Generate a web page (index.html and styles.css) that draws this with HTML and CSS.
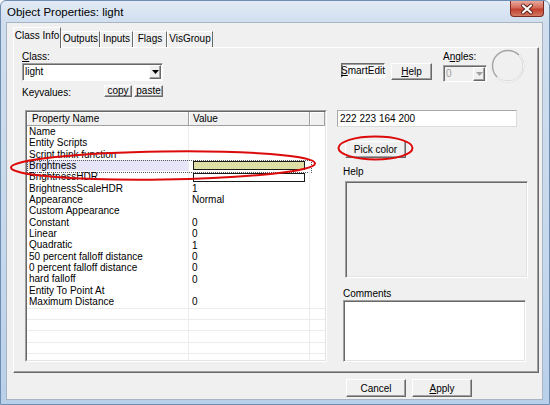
FILE: index.html
```html
<!DOCTYPE html>
<html>
<head>
<meta charset="utf-8">
<title>Object Properties: light</title>
<link rel="stylesheet" href="styles.css">
</head>
<body>
<div class="window">
  <div class="titlebar">
    <span class="title">Object Properties: light</span>
    <div class="close">
      <svg width="32" height="14" viewBox="0 0 32 14"><path d="M12 3.5 L20 10.5 M20 3.5 L12 10.5" stroke="#5b1d14" stroke-width="4" stroke-linecap="round"/><path d="M12 3.5 L20 10.5 M20 3.5 L12 10.5" stroke="#fff" stroke-width="2.2" stroke-linecap="round"/></svg>
    </div>
  </div>
  <div class="client">
    <div class="tabs">
      <div class="tab active">Class Info</div>
      <div class="tab">Outputs</div>
      <div class="tab">Inputs</div>
      <div class="tab">Flags</div>
      <div class="tab">VisGroup</div>
    </div>
    <div class="page">
      <div class="top">
        <div class="classbox">
          <div class="label"><u>C</u>lass:</div>
          <div class="combo">
            <span class="combo-text">light</span>
            <span class="combo-btn"><svg width="7" height="4" viewBox="0 0 7 4"><path d="M0 0H7L3.5 4Z" fill="#000"/></svg></span>
          </div>
          <div class="kvrow">
            <span class="label">Keyvalues:</span>
            <span class="kvbtns"><span class="btn small copy">copy</span><span class="btn small paste">paste</span></span>
          </div>
        </div>
        <div class="toggle"><u>S</u>martEdit</div>
        <div class="btn helpbtn"><u>H</u>elp</div>
        <div class="angles">
          <div class="label">A<u>n</u>gles:</div>
          <div class="combo disabled">
            <span class="combo-text">0</span>
            <span class="combo-btn"><svg width="7" height="4" viewBox="0 0 7 4"><path d="M0 0H7L3.5 4Z" fill="#a0a0a0"/></svg></span>
          </div>
        </div>
        <svg class="dial" width="34" height="34" viewBox="0 0 34 34">
          <circle cx="17" cy="17" r="15.5" fill="none" stroke="#a3a3a3" stroke-width="1.4"/>
          <path d="M28 6 A15.5 15.5 0 0 1 6 28" fill="none" stroke="#f4f4f4" stroke-width="1.2"/>
        </svg>
      </div>
      <div class="main">
        <div class="list">
          <div class="list-inner">
            <div class="header">
              <div class="hc c1">Property Name</div>
              <div class="hc c2">Value</div>
              <div class="hc c3"></div>
            </div>
            <div class="row"><div class="c1">Name</div><div class="c2"></div><div class="c3"></div></div>
            <div class="row"><div class="c1">Entity Scripts</div><div class="c2"></div><div class="c3"></div></div>
            <div class="row"><div class="c1">Script think function</div><div class="c2"></div><div class="c3"></div></div>
            <div class="row focus"><div class="c1 sel">Brightness</div><div class="c2"><span class="swatch color"></span></div><div class="c3"></div></div>
            <div class="row"><div class="c1">BrightnessHDR</div><div class="c2"><span class="swatch"></span></div><div class="c3"></div></div>
            <div class="row"><div class="c1">BrightnessScaleHDR</div><div class="c2">1</div><div class="c3"></div></div>
            <div class="row"><div class="c1">Appearance</div><div class="c2">Normal</div><div class="c3"></div></div>
            <div class="row"><div class="c1">Custom Appearance</div><div class="c2"></div><div class="c3"></div></div>
            <div class="row"><div class="c1">Constant</div><div class="c2">0</div><div class="c3"></div></div>
            <div class="row"><div class="c1">Linear</div><div class="c2">0</div><div class="c3"></div></div>
            <div class="row"><div class="c1">Quadratic</div><div class="c2">1</div><div class="c3"></div></div>
            <div class="row"><div class="c1">50 percent falloff distance</div><div class="c2">0</div><div class="c3"></div></div>
            <div class="row"><div class="c1">0 percent falloff distance</div><div class="c2">0</div><div class="c3"></div></div>
            <div class="row"><div class="c1">hard falloff</div><div class="c2">0</div><div class="c3"></div></div>
            <div class="row"><div class="c1">Entity To Point At</div><div class="c2"></div><div class="c3"></div></div>
            <div class="row"><div class="c1">Maximum Distance</div><div class="c2">0</div><div class="c3"></div></div>
            <div class="row empty"><div class="c1"></div><div class="c2"></div><div class="c3"></div></div>
            <div class="row empty"><div class="c1"></div><div class="c2"></div><div class="c3"></div></div>
            <div class="row empty"><div class="c1"></div><div class="c2"></div><div class="c3"></div></div>
            <div class="row empty"><div class="c1"></div><div class="c2"></div><div class="c3"></div></div>
            <div class="row empty"><div class="c1"></div><div class="c2"></div><div class="c3"></div></div>
          </div>
        </div>
        <div class="side">
          <div class="valuefield">222 223 164 200</div>
          <div class="btn pick">Pick color</div>
          <div class="label side-label">Help</div>
          <div class="helpbox"></div>
          <div class="label side-label comments-label">Comments</div>
          <div class="comments"></div>
        </div>
      </div>
    </div>
    <div class="footer">
      <div class="btn dlg">Cancel</div>
      <div class="btn dlg"><u>A</u>pply</div>
    </div>
  </div>
  <svg class="annot" width="550" height="405" viewBox="0 0 550 405">
    <ellipse cx="163" cy="165.5" rx="152" ry="14" transform="rotate(-0.8 163 165.5)" fill="none" stroke="#dc0a0a" stroke-width="2"/>
    <ellipse cx="375.5" cy="148" rx="37" ry="11.5" fill="none" stroke="#dc0a0a" stroke-width="2"/>
  </svg>
</div>
</body>
</html>
```
FILE: styles.css
```css
* { box-sizing: border-box; }
html, body { margin: 0; padding: 0; }
body {
  width: 550px;
  height: 405px;
  overflow: hidden;
  background: #fff;
  font-family: "Liberation Sans Narrow", "Liberation Sans", Arial, sans-serif;
  font-size: 10px;
  color: #000;
}
u { text-decoration: underline; text-underline-offset: 1px; }

.window {
  position: relative;
  width: 550px;
  height: 405px;
  border: 1px solid #6d8db3;
  border-radius: 6px 6px 0 0;
  background: linear-gradient(to bottom, #e2ebf6 0, #d0deee 22px, #c6d8ec 60%, #b9d0ea 100%);
  padding: 0 6px 4px 5px;
  display: flex;
  flex-direction: column;
}

.titlebar {
  height: 21px;
  margin: 0 -6px 0 -5px;
  padding-left: 6px;
  display: flex;
  align-items: flex-start;
}
.title {
  font-size: 11.5px;
  line-height: 22px;
}
.close {
  margin-left: auto;
  margin-right: 5px;
  width: 34px;
  height: 16px;
  border: 1px solid #7c2a22;
  border-top: none;
  border-radius: 0 0 4px 4px;
  background: linear-gradient(to bottom, #e9a99c 0, #d56a5a 45%, #c2402f 55%, #d27a63 100%);
  display: flex;
  align-items: center;
  justify-content: center;
}

.client {
  flex: 1;
  background: #f0f0f0;
  border: 1px solid #a9b5c4;
  padding: 4px 0 0 6px;
  display: flex;
  flex-direction: column;
}

.tabs {
  display: flex;
  height: 20px;
  align-items: flex-end;
  position: relative;
  z-index: 1;
}
.tab {
  height: 16px;
  border: 1px solid;
  border-color: #fff #696969 transparent #fff;
  border-bottom: none;
  line-height: 14px;
  text-align: center;
  background: #f0f0f0;
  white-space: nowrap;
}
.tab:nth-child(1) { width: 48px; }
.tab:nth-child(2) { width: 39px; }
.tab:nth-child(3) { width: 33px; }
.tab:nth-child(4) { width: 34px; }
.tab:nth-child(5) { width: 46px; }
.tab.active {
  height: 21px;
  margin-bottom: -1px;
  line-height: 16px;
}

.page {
  width: 526px;
  height: 326px;
  border: 1px solid;
  border-color: #fff #696969 #696969 #fff;
  box-shadow: inset -1px -1px #a0a0a0;
  padding: 3px 0 0 8px;
}

.label { line-height: 11px; height: 11px; white-space: nowrap; }

.top { display: flex; align-items: flex-start; }
.classbox { width: 141px; }

.combo {
  margin-top: 1px;
  height: 18px;
  background: #fff;
  border: 1px solid;
  border-color: #a0a0a0 #fff #fff #a0a0a0;
  box-shadow: inset 1px 1px #696969;
  display: flex;
  align-items: center;
  padding: 0 1px 0 2px;
}
.combo-text { flex: 1; line-height: 14px; }
.combo-btn {
  width: 12px;
  height: 14px;
  background: #f0f0f0;
  border: 1px solid;
  border-color: #fff #696969 #696969 #fff;
  box-shadow: inset -1px -1px #a0a0a0;
  display: flex;
  align-items: center;
  justify-content: center;
}
.combo.disabled { background: #f0f0f0; color: #a0a0a0; }

.kvrow {
  margin-top: 3px;
  height: 14px;
  display: flex;
  align-items: flex-end;
}
.kvrow .label { margin-bottom: 0; line-height: 12px; }
.kvbtns { margin-left: auto; display: flex; gap: 2px; margin-bottom: 1px; }

.btn {
  background: #f0f0f0;
  border: 1px solid;
  border-color: #fff #696969 #696969 #fff;
  box-shadow: inset -1px -1px #a0a0a0;
  display: flex;
  align-items: center;
  justify-content: center;
  white-space: nowrap;
}
.btn.small { height: 12px; line-height: 10px; }
.btn.copy { width: 28px; }
.btn.paste { width: 29px; }

.toggle {
  margin-left: 178px;
  margin-top: 12px;
  width: 44px;
  height: 15px;
  background: #f8f8f8;
  border: 1px solid;
  border-color: #696969 #fff #fff #696969;
  box-shadow: inset 1px 1px #a0a0a0;
  display: flex;
  align-items: center;
  justify-content: center;
}
.helpbtn {
  margin-left: 6px;
  margin-top: 12px;
  width: 41px;
  height: 17px;
}
.angles {
  margin-left: 11px;
  width: 44px;
}
.angles .combo { margin-top: 3px; height: 17px; }
.dial { margin-left: 4px; margin-top: -2px; }

.main {
  margin-top: 12px;
  display: flex;
  align-items: flex-start;
}
.list {
  margin-left: 3px;
  width: 302px;
  height: 252px;
  border: 1px solid;
  border-color: #a0a0a0 #fff #fff #a0a0a0;
  background: #fff;
}
.list-inner {
  height: 100%;
  border: 1px solid;
  border-color: #696969 #e3e3e3 #e3e3e3 #696969;
  overflow: hidden;
}
.header { display: flex; height: 14px; }
.hc {
  background: #f0f0f0;
  border-right: 1px solid #a0a0a0;
  border-bottom: 1px solid #a0a0a0;
  box-shadow: inset 1px 1px #fff;
  line-height: 13px;
  white-space: nowrap;
}
.c1 { width: 162px; flex: none; }
.c2 { width: 121px; flex: none; }
.c3 { flex: 1; }
.hc.c1 { padding-left: 5px; }
.hc.c2 { padding-left: 4px; }

.row {
  display: flex;
  height: 11.35px;
  line-height: 11px;
  position: relative;
}
.row .c1 { padding-left: 2px; border-right: 1px solid #ececec; white-space: nowrap; }
.row .c2 { padding-left: 3px; border-right: 1px solid #ececec; display: flex; align-items: center; }
.row.empty { border-top: 1px solid #ececec; }
.row .sel { background: #e6e6f8; }
.row.focus::after {
  content: "";
  position: absolute;
  left: 0;
  top: 0;
  width: 283px;
  height: 100%;
  border: 1px dotted #555;
}
.swatch {
  display: block;
  margin-left: 1px;
  width: 112px;
  height: 9px;
  border: 1px solid #1a1a1a;
  background: #fff;
}
.swatch.color { background: #dedfa4; }

.side {
  margin-left: 10px;
  width: 191px;
  display: flex;
  flex-direction: column;
  align-items: flex-start;
}
.valuefield {
  width: 180px;
  height: 17px;
  background: #fff;
  border: 1px solid;
  border-color: #a9a9a9 #dcdcdc #dcdcdc #a9a9a9;
  padding-left: 2px;
  line-height: 15px;
}
.pick {
  margin-top: 14px;
  margin-left: 8px;
  width: 61px;
  height: 17px;
}
.side-label { margin-left: 6px; margin-top: 8px; }
.helpbox {
  margin-top: 4px;
  margin-left: 8px;
  width: 183px;
  height: 97px;
  background: #f0f0f0;
  border: 1px solid;
  border-color: #a0a0a0 #fff #fff #a0a0a0;
  box-shadow: inset 1px 1px #696969, inset -1px -1px #e3e3e3;
}
.comments-label { margin-top: 10px; }
.comments {
  margin-top: 1px;
  margin-left: 6px;
  width: 183px;
  height: 62px;
  background: #fff;
  border: 1px solid;
  border-color: #a0a0a0 #fff #fff #a0a0a0;
  box-shadow: inset 1px 1px #696969, inset -1px -1px #e3e3e3;
}

.footer {
  margin-top: 6px;
  display: flex;
  justify-content: flex-end;
  gap: 6px;
  padding-right: 70px;
}
.btn.dlg { width: 60px; height: 18px; }

.annot {
  position: absolute;
  left: -1px;
  top: -1px;
  pointer-events: none;
}
```
